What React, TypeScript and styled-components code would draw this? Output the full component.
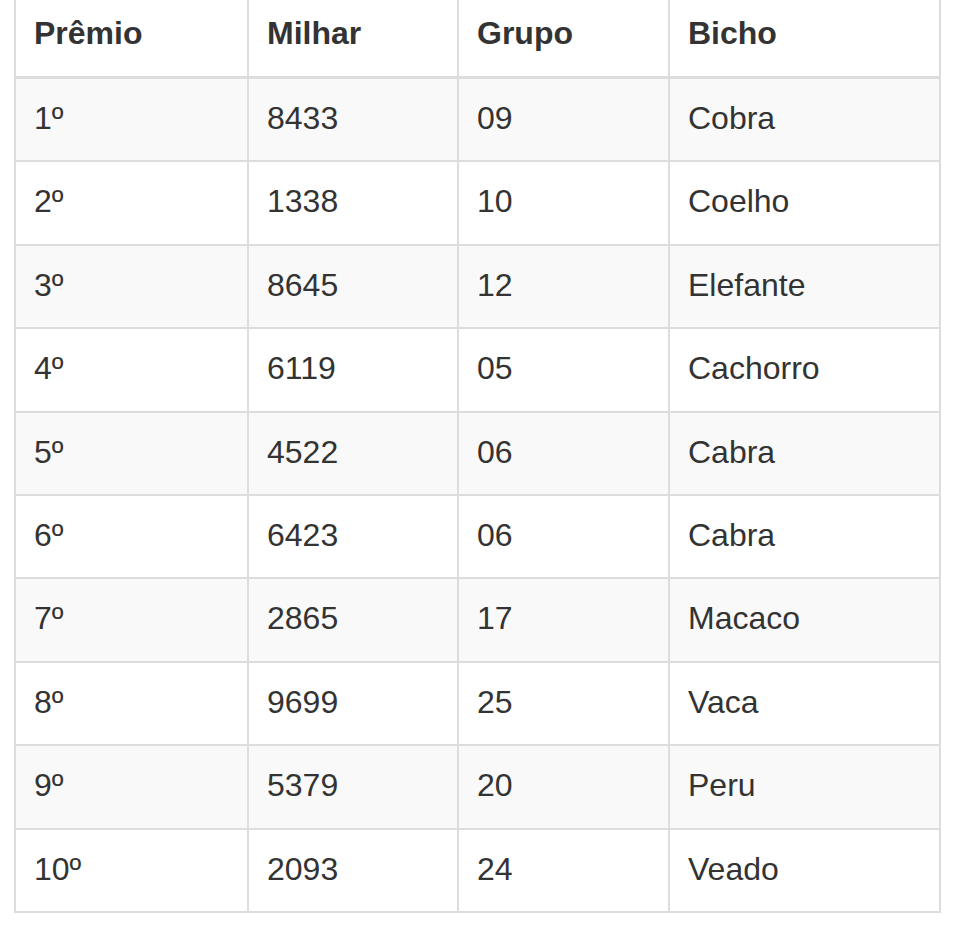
import React from 'react';
import styled, {createGlobalStyle} from "styled-components";

const GlobalStyle = createGlobalStyle`
    body {
        margin: 0;
        background: #fff;
        font-family: "Liberation Sans", Arial, sans-serif;
        color: #333;
    }
`

const Wrapper = styled.div`
    padding-left: 14px;
`

const Table = styled.table`
    width: 925px;
    border-collapse: collapse;
    table-layout: fixed;
    font-size: 32px;
    line-height: 45px;
    border: 2px solid #ddd;
    border-top: none;
`

const HeadCell = styled.th`
    text-align: left;
    font-weight: bold;
    padding: 11px 18px 20px;
    border-left: 2px solid #ddd;
    border-right: 2px solid #ddd;
    border-bottom: 3px solid #ddd;
    vertical-align: bottom;
`

const Row = styled.tr<{ $striped: boolean }>`
    background: ${p => p.$striped ? '#f9f9f9' : '#fff'};
`

const Cell = styled.td`
    padding: 17px 18px 19.4px;
    border: 2px solid #ddd;
    vertical-align: top;
`

const columns = [233, 210, 211, 271]

const results = [
  ['1º', '8433', '09', 'Cobra'],
  ['2º', '1338', '10', 'Coelho'],
  ['3º', '8645', '12', 'Elefante'],
  ['4º', '6119', '05', 'Cachorro'],
  ['5º', '4522', '06', 'Cabra'],
  ['6º', '6423', '06', 'Cabra'],
  ['7º', '2865', '17', 'Macaco'],
  ['8º', '9699', '25', 'Vaca'],
  ['9º', '5379', '20', 'Peru'],
  ['10º', '2093', '24', 'Veado'],
]

const App = () => {
  return (
    <>
      <GlobalStyle/>
      <Wrapper>
        <Table>
          <colgroup>
            {columns.map((w, i) => <col key={i} style={{width: w}}/>)}
          </colgroup>
          <thead>
          <tr>
            <HeadCell>Prêmio</HeadCell>
            <HeadCell>Milhar</HeadCell>
            <HeadCell>Grupo</HeadCell>
            <HeadCell>Bicho</HeadCell>
          </tr>
          </thead>
          <tbody>
          {results.map((r, i) => (
            <Row key={i} $striped={i % 2 === 0}>
              {r.map((v, j) => <Cell key={j}>{v}</Cell>)}
            </Row>
          ))}
          </tbody>
        </Table>
      </Wrapper>
    </>
  );
};

export default App;
